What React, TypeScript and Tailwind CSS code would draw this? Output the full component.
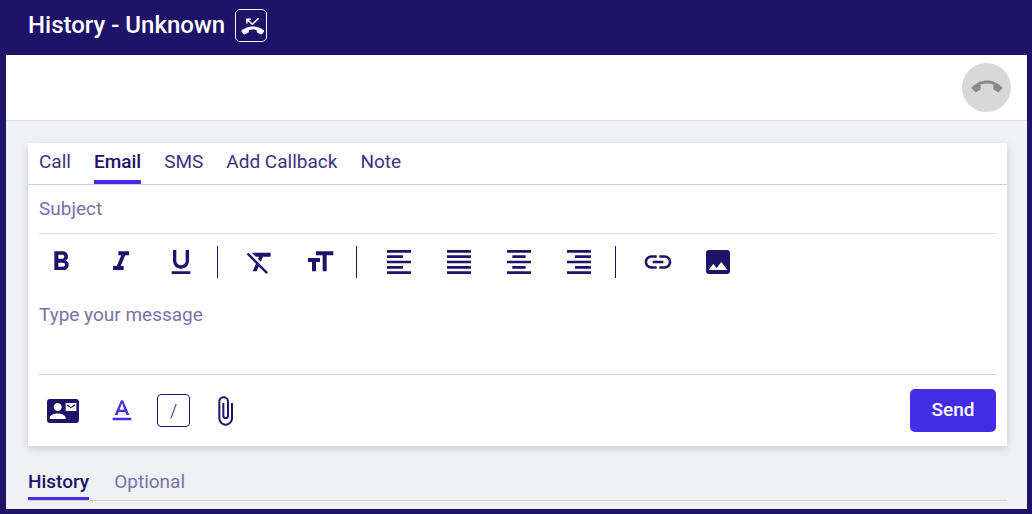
import React, { useState } from 'react';
import type { IconType } from 'react-icons';
import {
  MdAttachFile,
  MdContactMail,
  MdFormatAlignCenter,
  MdFormatAlignJustify,
  MdFormatAlignLeft,
  MdFormatAlignRight,
  MdFormatBold,
  MdFormatClear,
  MdFormatItalic,
  MdFormatSize,
  MdFormatUnderlined,
  MdImage,
  MdInsertLink,
  MdTextFormat,
} from 'react-icons/md';

const composeTabs = ['Call', 'Email', 'SMS', 'Add Callback', 'Note'];
const historyTabs = ['History', 'Optional'];

// toolbar groups, a divider goes between each of them
const toolGroups: { label: string; Icon: IconType }[][] = [
  [
    { label: 'Bold', Icon: MdFormatBold },
    { label: 'Italic', Icon: MdFormatItalic },
    { label: 'Underline', Icon: MdFormatUnderlined },
  ],
  [
    { label: 'Clear formatting', Icon: MdFormatClear },
    { label: 'Text size', Icon: MdFormatSize },
  ],
  [
    { label: 'Align left', Icon: MdFormatAlignLeft },
    { label: 'Justify', Icon: MdFormatAlignJustify },
    { label: 'Align center', Icon: MdFormatAlignCenter },
    { label: 'Align right', Icon: MdFormatAlignRight },
  ],
  [
    { label: 'Insert link', Icon: MdInsertLink },
    { label: 'Insert image', Icon: MdImage },
  ],
];

function MissedCallIcon() {
  return (
    <svg viewBox="0 0 24 24" className="size-6 shrink-0" aria-hidden="true">
      <path d="M11 5.2H6.9v4.3M7 5.4l5.3 4.8 6.4-5.9" fill="none" stroke="currentColor" strokeWidth="1.5" />
      <path
        fill="currentColor"
        d="M12.8 12.4c-4.200 0-8 1.400-10.800 3.700-.6.5-.7 1.300-.2 1.900l1.700 2c.4.500 1.100.6 1.700.3l2.900-1.600c.5-.3.8-.8.8-1.400v-1.200c2.500-.7 5.300-.7 7.800 0v1.200c0 .6.3 1.100.8 1.400l2.900 1.600c.6.300 1.300.2 1.700-.3l1.700-2c.5-.6.4-1.400-.2-1.900-2.800-2.300-6.600-3.700-10.800-3.700z"
      />
    </svg>
  );
}

function HangUpIcon() {
  return (
    <svg viewBox="0 0 32 32" className="size-8" aria-hidden="true">
      <path
        fill="currentColor"
        d="M.2 16C4.600 11 10 8.500 16 8.500S27.400 11 31.800 16l-4.500 4.500-5-3.200v-4.900c-4.200-1.300-8.400-1.300-12.600 0v4.900l-5 3.200z"
      />
    </svg>
  );
}

function Toolbar() {
  return (
    <div className="flex items-center px-1.5 pt-3">
      {toolGroups.map((group, i) => (
        <React.Fragment key={i}>
          {i > 0 && <span className="ml-5 mr-[26px] h-8 w-px shrink-0 bg-[#1e1369]" />}
          <div className="flex gap-7">
            {group.map(({ label, Icon }) => (
              <button key={label} type="button" aria-label={label} className="size-8">
                <Icon size={32} />
              </button>
            ))}
          </div>
        </React.Fragment>
      ))}
    </div>
  );
}

function Composer() {
  const [tab, setTab] = useState('Email');

  return (
    <section className="bg-white shadow-[0_3px_8px_rgba(0,0,0,0.16)]">
      <div role="tablist" className="flex h-[42px] gap-[23px] border-b border-[#d0d0e0] px-[11px]">
        {composeTabs.map((t) => (
          <button
            key={t}
            type="button"
            role="tab"
            aria-selected={t === tab}
            onClick={() => setTab(t)}
            className={
              t === tab
                ? 'border-b-4 border-[#432ee8] text-[19px] leading-9 font-medium'
                : 'border-b-4 border-transparent text-[19px] leading-9 text-[#3c327e]'
            }
          >
            {t}
          </button>
        ))}
      </div>
      <div className="px-[11px]">
        <input
          type="text"
          aria-label="Subject"
          placeholder="Subject"
          className="block h-[49px] w-full border-b border-[#dcdce4] pb-0.5 text-[19px] outline-none placeholder:text-[#7972a6]"
        />
        <Toolbar />
        <textarea
          aria-label="Message"
          placeholder="Type your message"
          className="mt-6 block h-[73px] w-full resize-none border-b border-[#d0d0e0] pt-px text-[19px] leading-6 outline-none placeholder:text-[#7972a6]"
        />
        <div className="flex items-center justify-between py-3.5">
          <div className="flex items-center gap-[19px] pl-2">
            <button type="button" aria-label="Contact card" className="mr-2 size-8">
              <MdContactMail size={32} />
            </button>
            <button type="button" aria-label="Text format" className="size-8 text-[#432ee8]">
              <MdTextFormat size={32} />
            </button>
            <button
              type="button"
              aria-label="Commands"
              className="size-[33px] rounded-sm border border-[#1e1369] text-lg leading-none font-light"
            >
              /
            </button>
            <button type="button" aria-label="Attach file" className="size-8">
              <MdAttachFile size={32} />
            </button>
          </div>
          <button type="button" className="h-[43px] w-[86px] rounded-[5px] bg-[#432ee8] text-[19px] font-medium text-white">
            Send
          </button>
        </div>
      </div>
    </section>
  );
}

export default function App() {
  const [tab, setTab] = useState('History');

  return (
    <div className="flex min-h-screen flex-col bg-[#1e1369] pr-[5px] pb-[5px] pl-1.5 font-['Roboto',sans-serif] text-[#1e1369]">
      <header className="flex h-[55px] items-center gap-2.5 px-[22px] pb-1 text-white">
        <h1 className="pb-0.5 text-2xl font-medium">History - Unknown</h1>
        <span className="flex h-[33px] w-8 items-center justify-center rounded-[5px] border border-white pl-0.5">
          <MissedCallIcon />
        </span>
      </header>
      <div className="flex justify-end border-b border-[#e2e0f4] bg-white px-4 py-2">
        <button
          type="button"
          aria-label="End call"
          disabled
          className="flex size-[49px] items-center justify-center rounded-full bg-[#d8d8d8] text-[#8a8a8a]"
        >
          <HangUpIcon />
        </button>
      </div>
      <main className="grow bg-[#f0f1f5] pt-[22px] pr-5 pb-2 pl-[22px]">
        <Composer />
        <div role="tablist" className="mt-5 flex gap-[25px] border-b border-[#d0d0e0]">
          {historyTabs.map((t) => (
            <button
              key={t}
              type="button"
              role="tab"
              aria-selected={t === tab}
              onClick={() => setTab(t)}
              className={
                t === tab
                  ? 'h-[34px] border-b-[3px] border-[#432ee8] pt-0.5 text-[19px] font-medium'
                  : 'h-[34px] border-b-[3px] border-transparent pt-0.5 text-[19px] text-[#7972a6]'
              }
            >
              {t}
            </button>
          ))}
        </div>
      </main>
    </div>
  );
}
